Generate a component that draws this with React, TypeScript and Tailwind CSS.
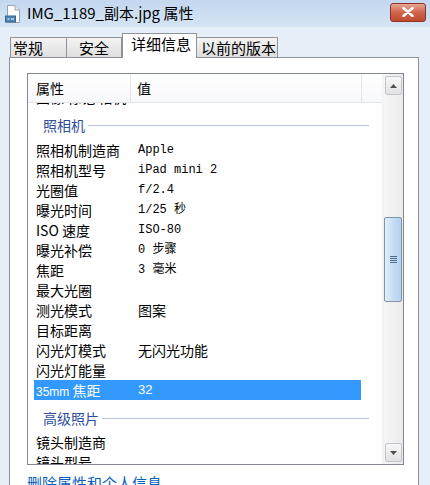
import React from 'react';

const ROWS = [
  { name: '照相机制造商', value: 'Apple', mono: true },
  { name: '照相机型号', value: 'iPad mini 2', mono: true },
  { name: '光圈值', value: 'f/2.4', mono: true },
  { name: '曝光时间', value: '1/25 秒', mono: true },
  { name: 'ISO 速度', value: 'ISO-80', mono: true },
  { name: '曝光补偿', value: '0 步骤', mono: true },
  { name: '焦距', value: '3 毫米', mono: true },
  { name: '最大光圈', value: '' },
  { name: '测光模式', value: '图案' },
  { name: '目标距离', value: '' },
  { name: '闪光灯模式', value: '无闪光功能' },
  { name: '闪光灯能量', value: '' },
];

const SANS = 'font-["Noto_Sans_CJK_SC","Liberation_Sans",sans-serif]';

function Row({ name, value, mono }: { name: string; value: string; mono?: boolean }) {
  return (
    <div className="flex h-[20px] items-center ml-[6px] w-[327px] text-[14px] text-black">
      <div className="w-[104px] pl-[2px] whitespace-nowrap">{name}</div>
      <div className={`whitespace-nowrap ${mono ? 'font-["Liberation_Mono","Noto_Sans_CJK_SC",monospace] text-[12px]' : ''}`}>{value}</div>
    </div>
  );
}

function Group({ label, className }: { label: string; className: string }) {
  return (
    <div className={`flex items-center pl-[15px] pr-[13px] ${className}`}>
      <span className="text-[14px] text-[#2c4c9c] whitespace-nowrap">{label}</span>
      <div className="flex-1 h-px bg-[#b9c6de] ml-[3px]" />
    </div>
  );
}

function FileIcon() {
  return (
    <svg width="16" height="18" viewBox="0 0 16 18">
      <path d="M2.5 0.5 H10 L14.5 5 V17.5 H2.5 Z" fill="#ffffff" stroke="#9aa4b0" />
      <path d="M10 0.5 V5 H14.5" fill="#e6ebf1" stroke="#9aa4b0" />
      <rect x="0.5" y="11" width="10" height="6" fill="#4f86b8" stroke="#35658f" />
      <path d="M2.5 14 h2 M6 14 h3" stroke="#ffffff" strokeWidth="1.2" />
    </svg>
  );
}

function ScrollArrow({ down }: { down?: boolean }) {
  return (
    <div className="w-[17px] h-[19px] mx-auto rounded-[2px] border border-[#c2c6cc] bg-gradient-to-b from-[#f7f7f7] to-[#e2e2e2] flex items-center justify-center">
      <svg width="7" height="4" viewBox="0 0 7 4">
        <path d={down ? 'M0 0 H7 L3.5 4 Z' : 'M0 4 H7 L3.5 0 Z'} fill="#505050" />
      </svg>
    </div>
  );
}

export default function App() {
  return (
    <div className={`w-[430px] h-[485px] overflow-hidden bg-[#e6eef8] ${SANS} flex flex-col`}>
      {/* 标题栏 */}
      <div className="h-[27px] shrink-0 flex items-center bg-gradient-to-b from-[#c3d8ef] to-[#d5e4f4] pl-[5px] pr-[4px]">
        <FileIcon />
        <span className="ml-[6px] text-[15px] text-black whitespace-nowrap">IMG_1189_副本.jpg 属性</span>
        <div className="ml-auto w-[36px] h-[19px] mb-[3px] rounded-[3px] border border-[#8a3425] bg-gradient-to-b from-[#e8a797] via-[#d0634c] to-[#c14a30] flex items-center justify-center">
          <svg width="12" height="10" viewBox="0 0 12 10">
            <path d="M1.5 1 L10.5 9 M10.5 1 L1.5 9" stroke="#ffffff" strokeWidth="2.6" strokeLinecap="round" />
          </svg>
        </div>
      </div>

      <div className="flex-1 flex flex-col pl-[9px] pr-[11px] pt-[6px]">
        {/* 选项卡 */}
        <div className="flex items-end h-[24px] pl-[1px]">
          <div className="h-[20px] w-[57px] border border-b-0 border-[#8e9299] bg-gradient-to-b from-[#f4f4f4] to-[#dedede] text-[15px] leading-[19px] pl-[2px]">常规</div>
          <div className="h-[20px] w-[55px] border border-b-0 border-l-0 border-[#8e9299] bg-gradient-to-b from-[#f4f4f4] to-[#dedede] text-[15px] leading-[19px] pl-[12px]">安全</div>
          <div className="h-[25px] w-[75px] border border-b-0 border-[#8e9299] bg-white text-[15px] leading-[20px] pl-[8px] relative z-10 -mb-px">详细信息</div>
          <div className="h-[20px] w-[81px] border border-b-0 border-l-0 border-[#8e9299] bg-gradient-to-b from-[#f4f4f4] to-[#dedede] text-[15px] leading-[19px] pl-[4px]">以前的版本</div>
        </div>

        {/* 选项卡面板 */}
        <div className="flex-1 border border-[#8e9299] bg-white pl-[17px] pt-[15px]">
          <div className="w-[377px] h-[392px] border border-[#828790] flex">
            <div className="w-[354px] flex flex-col">
              <div className="h-[29px] shrink-0 flex items-stretch bg-gradient-to-b from-white to-[#f7f8fa] border-b border-[#e3e5e8] text-[14px] text-black">
                <div className="w-[103px] border-r border-[#e3e5e8] flex items-center pl-[8px]">属性</div>
                <div className="w-[231px] border-r border-[#e3e5e8] flex items-center pl-[6px]">值</div>
              </div>
              <div className="flex-1 overflow-hidden">
                <div className="-mt-[16px]">
                  <Row name="图像 标记 相机" value="" />
                  <Group label="照相机" className="h-[33px] pt-[3px]" />
                  {ROWS.map((r) => (
                    <Row key={r.name} {...r} />
                  ))}
                  <div className="flex h-[20px] items-center ml-[6px] w-[327px] bg-[#3399ff] text-white">
                    <div className="w-[104px] pl-[2px] whitespace-nowrap text-[14px]">
                      <span className="font-['Liberation_Sans',sans-serif] text-[12px]">35mm</span> 焦距
                    </div>
                    <div className="font-['Liberation_Sans',sans-serif] text-[13px]">32</div>
                  </div>
                  <Group label="高级照片" className="h-[32px] pt-[4px]" />
                  <Row name="镜头制造商" value="" />
                  <Row name="镜头型号" value="" />
                </div>
              </div>
            </div>

            {/* 滚动条 */}
            <div className="w-[21px] bg-gradient-to-r from-[#f6f6f6] to-[#ebebeb] border-l border-[#f2f2f2] flex flex-col pt-[2px] pb-[2px]">
              <ScrollArrow />
              <div className="h-[122px]" />
              <div className="w-[18px] h-[85px] mx-auto rounded-[2px] border border-[#7f95ab] bg-gradient-to-r from-[#e2eefa] via-[#c6def4] to-[#b3d1ee] flex items-center justify-center">
                <div className="flex flex-col gap-[1px]">
                  <div className="w-[7px] h-px bg-[#4d6a88]" />
                  <div className="w-[7px] h-px bg-[#4d6a88]" />
                  <div className="w-[7px] h-px bg-[#4d6a88]" />
                  <div className="w-[7px] h-px bg-[#4d6a88]" />
                </div>
              </div>
              <div className="flex-1" />
              <ScrollArrow down />
            </div>
          </div>

          <div className="mt-[7px] text-[15px] text-[#0a5fbf] whitespace-nowrap">删除属性和个人信息</div>
        </div>
      </div>
    </div>
  );
}
